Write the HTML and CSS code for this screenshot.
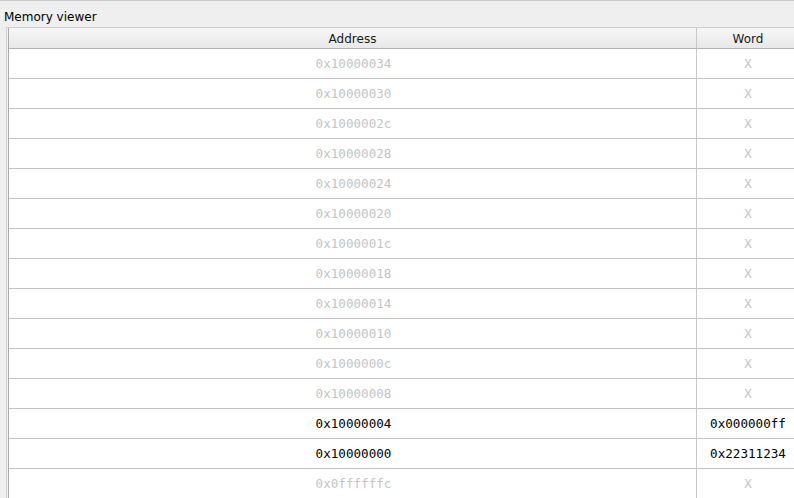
FILE: index.html
```html
<!DOCTYPE html>
<html>
<head>
<meta charset="utf-8">
<link rel="stylesheet" href="styles.css">
</head>
<body>
<div class="window">
  <div class="title">Memory viewer</div>
  <div class="frame">
    <div class="table">
      <div class="head">
        <div class="hcell addr">Address</div>
        <div class="hcell word">Word</div>
      </div>
      <div class="row"><div class="cell addr">0x10000034</div><div class="cell word">X</div></div>
      <div class="row"><div class="cell addr">0x10000030</div><div class="cell word">X</div></div>
      <div class="row"><div class="cell addr">0x1000002c</div><div class="cell word">X</div></div>
      <div class="row"><div class="cell addr">0x10000028</div><div class="cell word">X</div></div>
      <div class="row"><div class="cell addr">0x10000024</div><div class="cell word">X</div></div>
      <div class="row"><div class="cell addr">0x10000020</div><div class="cell word">X</div></div>
      <div class="row"><div class="cell addr">0x1000001c</div><div class="cell word">X</div></div>
      <div class="row"><div class="cell addr">0x10000018</div><div class="cell word">X</div></div>
      <div class="row"><div class="cell addr">0x10000014</div><div class="cell word">X</div></div>
      <div class="row"><div class="cell addr">0x10000010</div><div class="cell word">X</div></div>
      <div class="row"><div class="cell addr">0x1000000c</div><div class="cell word">X</div></div>
      <div class="row"><div class="cell addr">0x10000008</div><div class="cell word">X</div></div>
      <div class="row active"><div class="cell addr">0x10000004</div><div class="cell word">0x000000ff</div></div>
      <div class="row active"><div class="cell addr">0x10000000</div><div class="cell word">0x22311234</div></div>
      <div class="row"><div class="cell addr">0x0ffffffc</div><div class="cell word">X</div></div>
    </div>
  </div>
</div>
</body>
</html>
```

FILE: styles.css
```css
html, body {
  margin: 0;
  padding: 0;
  width: 794px;
  height: 498px;
  overflow: hidden;
  background: #efefef;
}
.window {
  border-top: 1px solid #c9c9c9;
  font-family: "DejaVu Sans", sans-serif;
  font-size: 12px;
  color: #000;
}
.title {
  padding: 9px 0 3px 4px;
  line-height: 14px;
  height: 14px;
}
.frame {
  margin-left: 6px;
  width: 820px;
  border-left: 1px solid #d2d2d2;
  border-top: 1px solid #cdcdcd;
  padding-left: 1px;
  background: #f3f3f3;
}
.table {
  border-left: 1px solid #ababab;
  background: #fff;
}
.head {
  display: grid;
  grid-template-columns: 688px 1fr;
  height: 20px;
  border-bottom: 1px solid #b4b4b4;
  background: linear-gradient(#f7f7f7, #e8e8e8);
}
.hcell {
  padding-top: 3px;
  line-height: 17px;
  text-align: center;
  color: #1a1a1a;
}
.hcell.addr {
  border-right: 1px solid #c8c8c8;
}
.hcell.word {
  padding-right: 29px;
}
.row {
  display: grid;
  grid-template-columns: 688px 1fr;
  height: 29px;
  border-bottom: 1px solid #c3c3c3;
  font-family: "DejaVu Sans Mono", monospace;
  font-size: 12.6px;
  color: #c4c4c4;
}
.row.active {
  color: #000;
}
.cell {
  line-height: 29px;
  text-align: center;
}
.cell.addr {
  border-right: 1px solid #c8c8c8;
  padding-left: 2px;
}
.cell.word {
  padding-right: 29px;
}
```
